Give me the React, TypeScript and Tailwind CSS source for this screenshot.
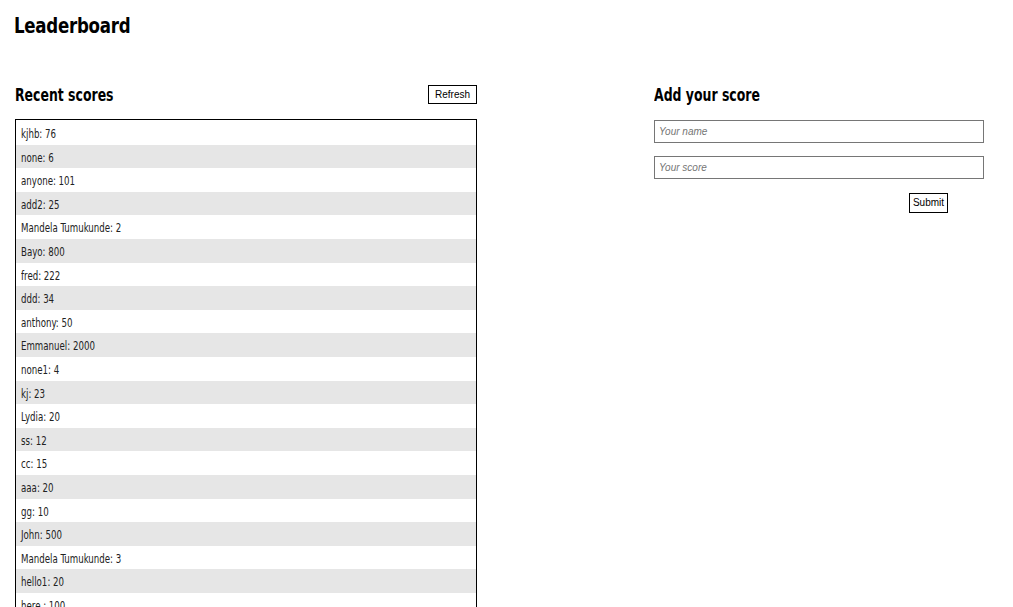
import React, { useState } from 'react';

type Score = { user: string; score: number };

const initialScores: Score[] = [
  { user: 'kjhb', score: 76 },
  { user: 'none', score: 6 },
  { user: 'anyone', score: 101 },
  { user: 'add2', score: 25 },
  { user: 'Mandela Tumukunde', score: 2 },
  { user: 'Bayo', score: 800 },
  { user: 'fred', score: 222 },
  { user: 'ddd', score: 34 },
  { user: 'anthony', score: 50 },
  { user: 'Emmanuel', score: 2000 },
  { user: 'none1', score: 4 },
  { user: 'kj', score: 23 },
  { user: 'Lydia', score: 20 },
  { user: 'ss', score: 12 },
  { user: 'cc', score: 15 },
  { user: 'aaa', score: 20 },
  { user: 'gg', score: 10 },
  { user: 'John', score: 500 },
  { user: 'Mandela Tumukunde', score: 3 },
  { user: 'hello1', score: 20 },
  { user: 'here ', score: 100 },
  { user: 'test', score: 42 },
];

const condensed = { fontFamily: '"DejaVu Sans Condensed", "DejaVu Sans", sans-serif' };
const arial = { fontFamily: '"Liberation Sans", Arial, sans-serif' };

export default function App() {
  const [scores] = useState<Score[]>(initialScores);
  const [name, setName] = useState('');
  const [score, setScore] = useState('');

  return (
    <div className="min-h-screen bg-white text-black" style={condensed}>
      <h1 className="pl-[14px] pt-[13px] text-[22px] font-bold leading-[26px] tracking-[-0.3px]">
        <span className="inline-block origin-left scale-x-[0.84]">Leaderboard</span>
      </h1>

      <div className="mt-[45px] flex pl-[15px]">
        {/* Recent scores */}
        <section className="w-[462px]">
          <div className="flex h-[35px] items-start justify-between">
            <h2 className="mt-[1px] text-[18px] font-bold leading-[20px]">
              <span className="inline-block origin-left scale-x-[0.77]">Recent scores</span>
            </h2>
            <button
              type="button"
              className="mt-[1px] h-[19px] w-[49px] border border-black bg-white text-[10px] leading-none"
              style={arial}
            >
              Refresh
            </button>
          </div>
          <ul className="border border-black pt-[1px]">
            {scores.map((s, i) => (
              <li
                key={i}
                className={`h-[23.6px] pl-[5px] pt-[2px] text-[12px] leading-[23.6px] text-[#222] ${
                  i % 2 === 1 ? 'bg-[#e6e6e6]' : 'bg-white'
                }`}
              >
                <span className="inline-block origin-left scale-x-[0.8] whitespace-pre">
                  {s.user}: {s.score}
                </span>
              </li>
            ))}
          </ul>
        </section>

        {/* Add your score */}
        <section className="ml-[177px] w-[330px]">
          <h2 className="mt-[1px] h-[34px] text-[18px] font-bold leading-[20px]">
            <span className="inline-block origin-left scale-x-[0.77]">Add your score</span>
          </h2>
          <form className="flex flex-col pt-[1px]" style={arial} onSubmit={(e) => e.preventDefault()}>
            <input
              value={name}
              onChange={(e) => setName(e.target.value)}
              placeholder="Your name"
              className="h-[23px] w-[330px] border border-[#767676] px-[4px] text-[10px] italic placeholder:text-[#757575]"
            />
            <input
              value={score}
              onChange={(e) => setScore(e.target.value)}
              placeholder="Your score"
              className="mt-[13px] h-[23px] w-[330px] border border-[#767676] px-[4px] text-[10px] italic placeholder:text-[#757575]"
            />
            <div className="mt-[14px] flex justify-end pr-[36px]">
              <button type="submit" className="h-[20px] w-[39px] border border-black bg-white text-[10px] leading-none">
                Submit
              </button>
            </div>
          </form>
        </section>
      </div>
    </div>
  );
}
